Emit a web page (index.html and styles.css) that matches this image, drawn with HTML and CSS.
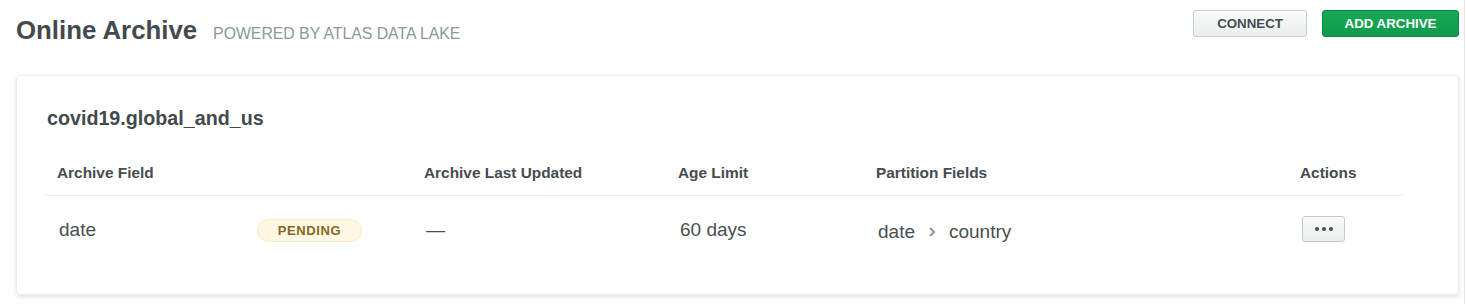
FILE: index.html
```html
<!DOCTYPE html>
<html>
<head>
<meta charset="utf-8">
<link rel="stylesheet" href="styles.css">
</head>
<body>
<div class="page">
  <div class="topbar">
    <div class="heading">
      <h1 class="title">Online Archive</h1>
      <span class="subtitle">POWERED BY ATLAS DATA LAKE</span>
    </div>
    <div class="actions">
      <button class="btn btn-default">CONNECT</button>
      <button class="btn btn-primary">ADD ARCHIVE</button>
    </div>
  </div>
  <div class="card">
    <h2 class="card-title">covid19.global_and_us</h2>
    <div class="table">
      <div class="row head">
        <div class="cell">Archive Field</div>
        <div class="cell"></div>
        <div class="cell">Archive Last Updated</div>
        <div class="cell">Age Limit</div>
        <div class="cell">Partition Fields</div>
        <div class="cell">Actions</div>
      </div>
      <div class="row body">
        <div class="cell">date</div>
        <div class="cell"><span class="badge">PENDING</span></div>
        <div class="cell">—</div>
        <div class="cell">60 days</div>
        <div class="cell partition">date
          <svg class="chev" width="8" height="12" viewBox="0 0 8 12"><path d="M2 2 L6 6 L2 10" fill="none" stroke="#89989b" stroke-width="2"/></svg>
          country</div>
        <div class="cell"><button class="more"><span></span><span></span><span></span></button></div>
      </div>
    </div>
  </div>
</div>
</body>
</html>
```
FILE: styles.css
```css
html, body {
  margin: 0;
  padding: 0;
  background: #fff;
}
body {
  font-family: "Liberation Sans", Arial, sans-serif;
  color: #464c4f;
}
.page {
  box-sizing: border-box;
  width: 1465px;
  height: 304px;
  border-right: 1px solid #e4e8e8;
  padding: 10px 5px 0 16px;
}
.topbar {
  display: flex;
  justify-content: space-between;
  align-items: flex-start;
  height: 34px;
  margin-bottom: 31px;
}
.heading {
  display: flex;
  align-items: baseline;
  margin-top: 5px;
}
.title {
  margin: 0;
  font-size: 25.8px;
  line-height: 30px;
  font-weight: bold;
  color: #43494c;
}
.subtitle {
  margin-left: 16px;
  font-size: 15.8px;
  color: #89989b;
}
.actions {
  display: flex;
  gap: 15px;
}
.btn {
  height: 27px;
  box-sizing: border-box;
  border-radius: 3px;
  font-family: "Liberation Sans", Arial, sans-serif;
  font-weight: bold;
  font-size: 13.3px;
  padding: 0;
  cursor: pointer;
}
.btn-default {
  width: 114px;
  background: linear-gradient(#fafbfb, #e9eeed);
  border: 1px solid #c3cdcb;
  color: #464c4f;
}
.btn-primary {
  width: 137px;
  background: linear-gradient(#16a956, #109b4b);
  border: 1px solid #0b8748;
  color: #fff;
}
.card {
  box-sizing: border-box;
  width: 1443px;
  height: 220px;
  border: 1px solid #e7eeec;
  border-radius: 4px;
  box-shadow: 0 2px 4px rgba(6, 22, 33, 0.12);
  padding: 30px 55px 0 28px;
}
.card-title {
  margin: 0 0 20px 2px;
  font-size: 19.7px;
  line-height: 24px;
  font-weight: bold;
  color: #43494c;
}
.row {
  display: grid;
  grid-template-columns: 200px 167px 254px 198px 424px 115px;
  align-items: center;
}
.row.head {
  height: 45px;
  border-bottom: 1px solid #e7eeec;
  font-size: 15.4px;
  font-weight: bold;
}
.row.body {
  height: 68px;
  font-size: 19px;
  color: #494f52;
}
.cell {
  padding-left: 12px;
}
.row.body .cell {
  padding-left: 14px;
}
.row.body .cell:nth-child(2) {
  padding-left: 12px;
}
.row.body .cell:nth-child(6) {
  padding-left: 14px;
}
.badge {
  display: inline-block;
  box-sizing: border-box;
  width: 105px;
  height: 23px;
  line-height: 21px;
  text-align: center;
  border-radius: 12px;
  background: #fef7e3;
  border: 1px solid #fbecbf;
  color: #86681d;
  font-size: 13px;
  font-weight: bold;
  letter-spacing: 0.6px;
  vertical-align: middle;
}
.partition {
  display: flex;
  align-items: center;
  padding-top: 3px;
}
.chev {
  margin: 0 13px 0 13px;
}
.more {
  box-sizing: border-box;
  width: 43px;
  height: 26px;
  border: 1px solid #c3cdcb;
  border-radius: 3px;
  background: linear-gradient(#fafbfb, #e9eeed);
  display: flex;
  justify-content: center;
  align-items: center;
  gap: 3px;
  padding: 0;
  margin-top: -3px;
}
.more span {
  width: 4px;
  height: 4px;
  border-radius: 50%;
  background: #464c4f;
}
```
